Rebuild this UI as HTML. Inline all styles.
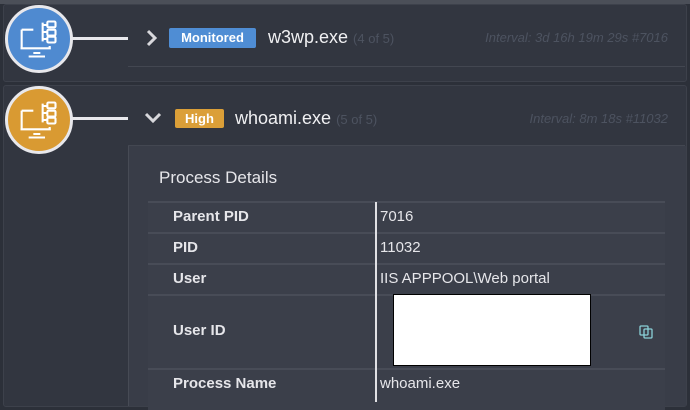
<!DOCTYPE html><html><head><style>
body{margin:0;width:690px;height:401px;background:#2c3039;font-family:"Liberation Sans",sans-serif;position:relative;overflow:hidden}
.a{position:absolute}
.card{position:absolute;background:#323640;border:1px solid #3d414b;border-radius:3px}
.circ{position:absolute;width:62px;height:62px;border:3px solid #e8e8ec;border-radius:50%}
.lbl{color:#e6e6ea;font-weight:bold;font-size:15px}
.val{color:#e6e6ea;font-size:15px}
.row{position:absolute;left:148px;width:517px;background:#3b3f4a;border-top:2px solid #484c57}
</style></head><body>
<div class="a" style="left:0;top:0;width:690px;height:4px;background:#4b4f58"></div>
<div class="card" style="left:3px;top:4px;width:682px;height:76px"></div>
<div class="a" style="left:128px;top:66px;width:557px;height:1px;background:#434751"></div>
<div class="card" style="left:3px;top:85px;width:682px;height:320px"></div>
<div class="a" style="left:128px;top:145px;width:557px;height:1px;background:#434751"></div>
<div class="a" style="left:128px;top:146px;width:557px;height:260px;background:#393d48;border-left:1px solid #474b55"></div>

<div class="a" style="left:70px;top:37px;width:58px;height:3px;background:#e8e8ec"></div>
<div class="a" style="left:70px;top:117px;width:58px;height:3px;background:#e8e8ec"></div>
<div class="circ" style="left:5px;top:5px;background:#4f8ad0"></div>
<div class="circ" style="left:5px;top:86px;background:#d99a32"></div>
<svg class="a" style="left:17px;top:18px" width="42" height="42" viewBox="0 0 36 36" fill="none" stroke="#fff" stroke-width="1.8"><path d="M4 10h10M4 10v16h24v-2M14 30h6M10 33h14M3 26h26"/><path d="M22 4v16M22 6h4M22 12h4M22 18h4"/><rect x="26" y="3" width="7" height="5" rx="1"/><rect x="26" y="10" width="7" height="5" rx="1"/><rect x="26" y="16" width="7" height="5" rx="1"/></svg>
<svg class="a" style="left:17px;top:99px" width="42" height="42" viewBox="0 0 36 36" fill="none" stroke="#fff" stroke-width="1.8"><path d="M4 10h10M4 10v16h24v-2M14 30h6M10 33h14M3 26h26"/><path d="M22 4v16M22 6h4M22 12h4M22 18h4"/><rect x="26" y="3" width="7" height="5" rx="1"/><rect x="26" y="10" width="7" height="5" rx="1"/><rect x="26" y="16" width="7" height="5" rx="1"/></svg>

<svg class="a" style="left:145px;top:29px" width="14" height="18"><path d="M3 2l7 7-7 7" stroke="#d8d8dc" stroke-width="3" fill="none"/></svg>
<div class="a" style="left:169px;top:28px;width:87px;height:20px;background:#4f8dd4;border-radius:2px;color:#fff;font-weight:bold;font-size:13px;line-height:20px;text-align:center">Monitored</div>
<div class="a" style="left:268px;top:27px;color:#f0f0f2;font-size:18px">w3wp.exe <span style="color:#4d5360;font-size:13px">(4 of 5)</span></div>
<div class="a" style="right:22px;top:30px;color:#4d5360;font-size:13px;font-style:italic">Interval: 3d 16h 19m 29s #7016</div>

<svg class="a" style="left:144px;top:111px" width="20" height="14"><path d="M2 3l7 7 7-7" stroke="#d8d8dc" stroke-width="3" fill="none"/></svg>
<div class="a" style="left:175px;top:109px;width:49px;height:19px;background:#db9f38;border-radius:2px;color:#fff;font-weight:bold;font-size:13px;line-height:19px;text-align:center">High</div>
<div class="a" style="left:235px;top:108px;color:#f0f0f2;font-size:18px">whoami.exe <span style="color:#4d5360;font-size:13px">(5 of 5)</span></div>
<div class="a" style="right:22px;top:111px;color:#4d5360;font-size:13px;font-style:italic">Interval: 8m 18s #11032</div>

<div class="a" style="left:159px;top:168px;color:#e6e6ea;font-size:17px">Process Details</div>
<div class="row" style="top:201px;height:29px"></div>
<div class="row" style="top:232px;height:29px"></div>
<div class="row" style="top:263px;height:29px"></div>
<div class="row" style="top:294px;height:72px"></div>
<div class="row" style="top:368px;height:40px"></div>
<div class="a" style="left:375px;top:202px;width:2px;height:200px;background:#e0e0e4"></div>
<div class="a lbl" style="left:173px;top:208px">Parent PID</div><div class="a val" style="left:380px;top:208px">7016</div>
<div class="a lbl" style="left:173px;top:239px">PID</div><div class="a val" style="left:380px;top:239px">11032</div>
<div class="a lbl" style="left:173px;top:270px">User</div><div class="a val" style="left:380px;top:270px">IIS APPPOOL\Web portal</div>
<div class="a lbl" style="left:173px;top:322px">User ID</div>
<div class="a" style="left:393px;top:294px;width:196px;height:70px;background:#fff;border:1px solid #000"></div>
<svg class="a" style="left:638px;top:324px" width="16" height="16" fill="none" stroke="#8ad0d8" stroke-width="1.3"><rect x="2" y="2" width="8" height="9" rx="1"/><rect x="6" y="5" width="8" height="9" rx="1"/></svg>
<div class="a lbl" style="left:173px;top:375px">Process Name</div><div class="a val" style="left:380px;top:375px">whoami.exe</div>
</body></html>
